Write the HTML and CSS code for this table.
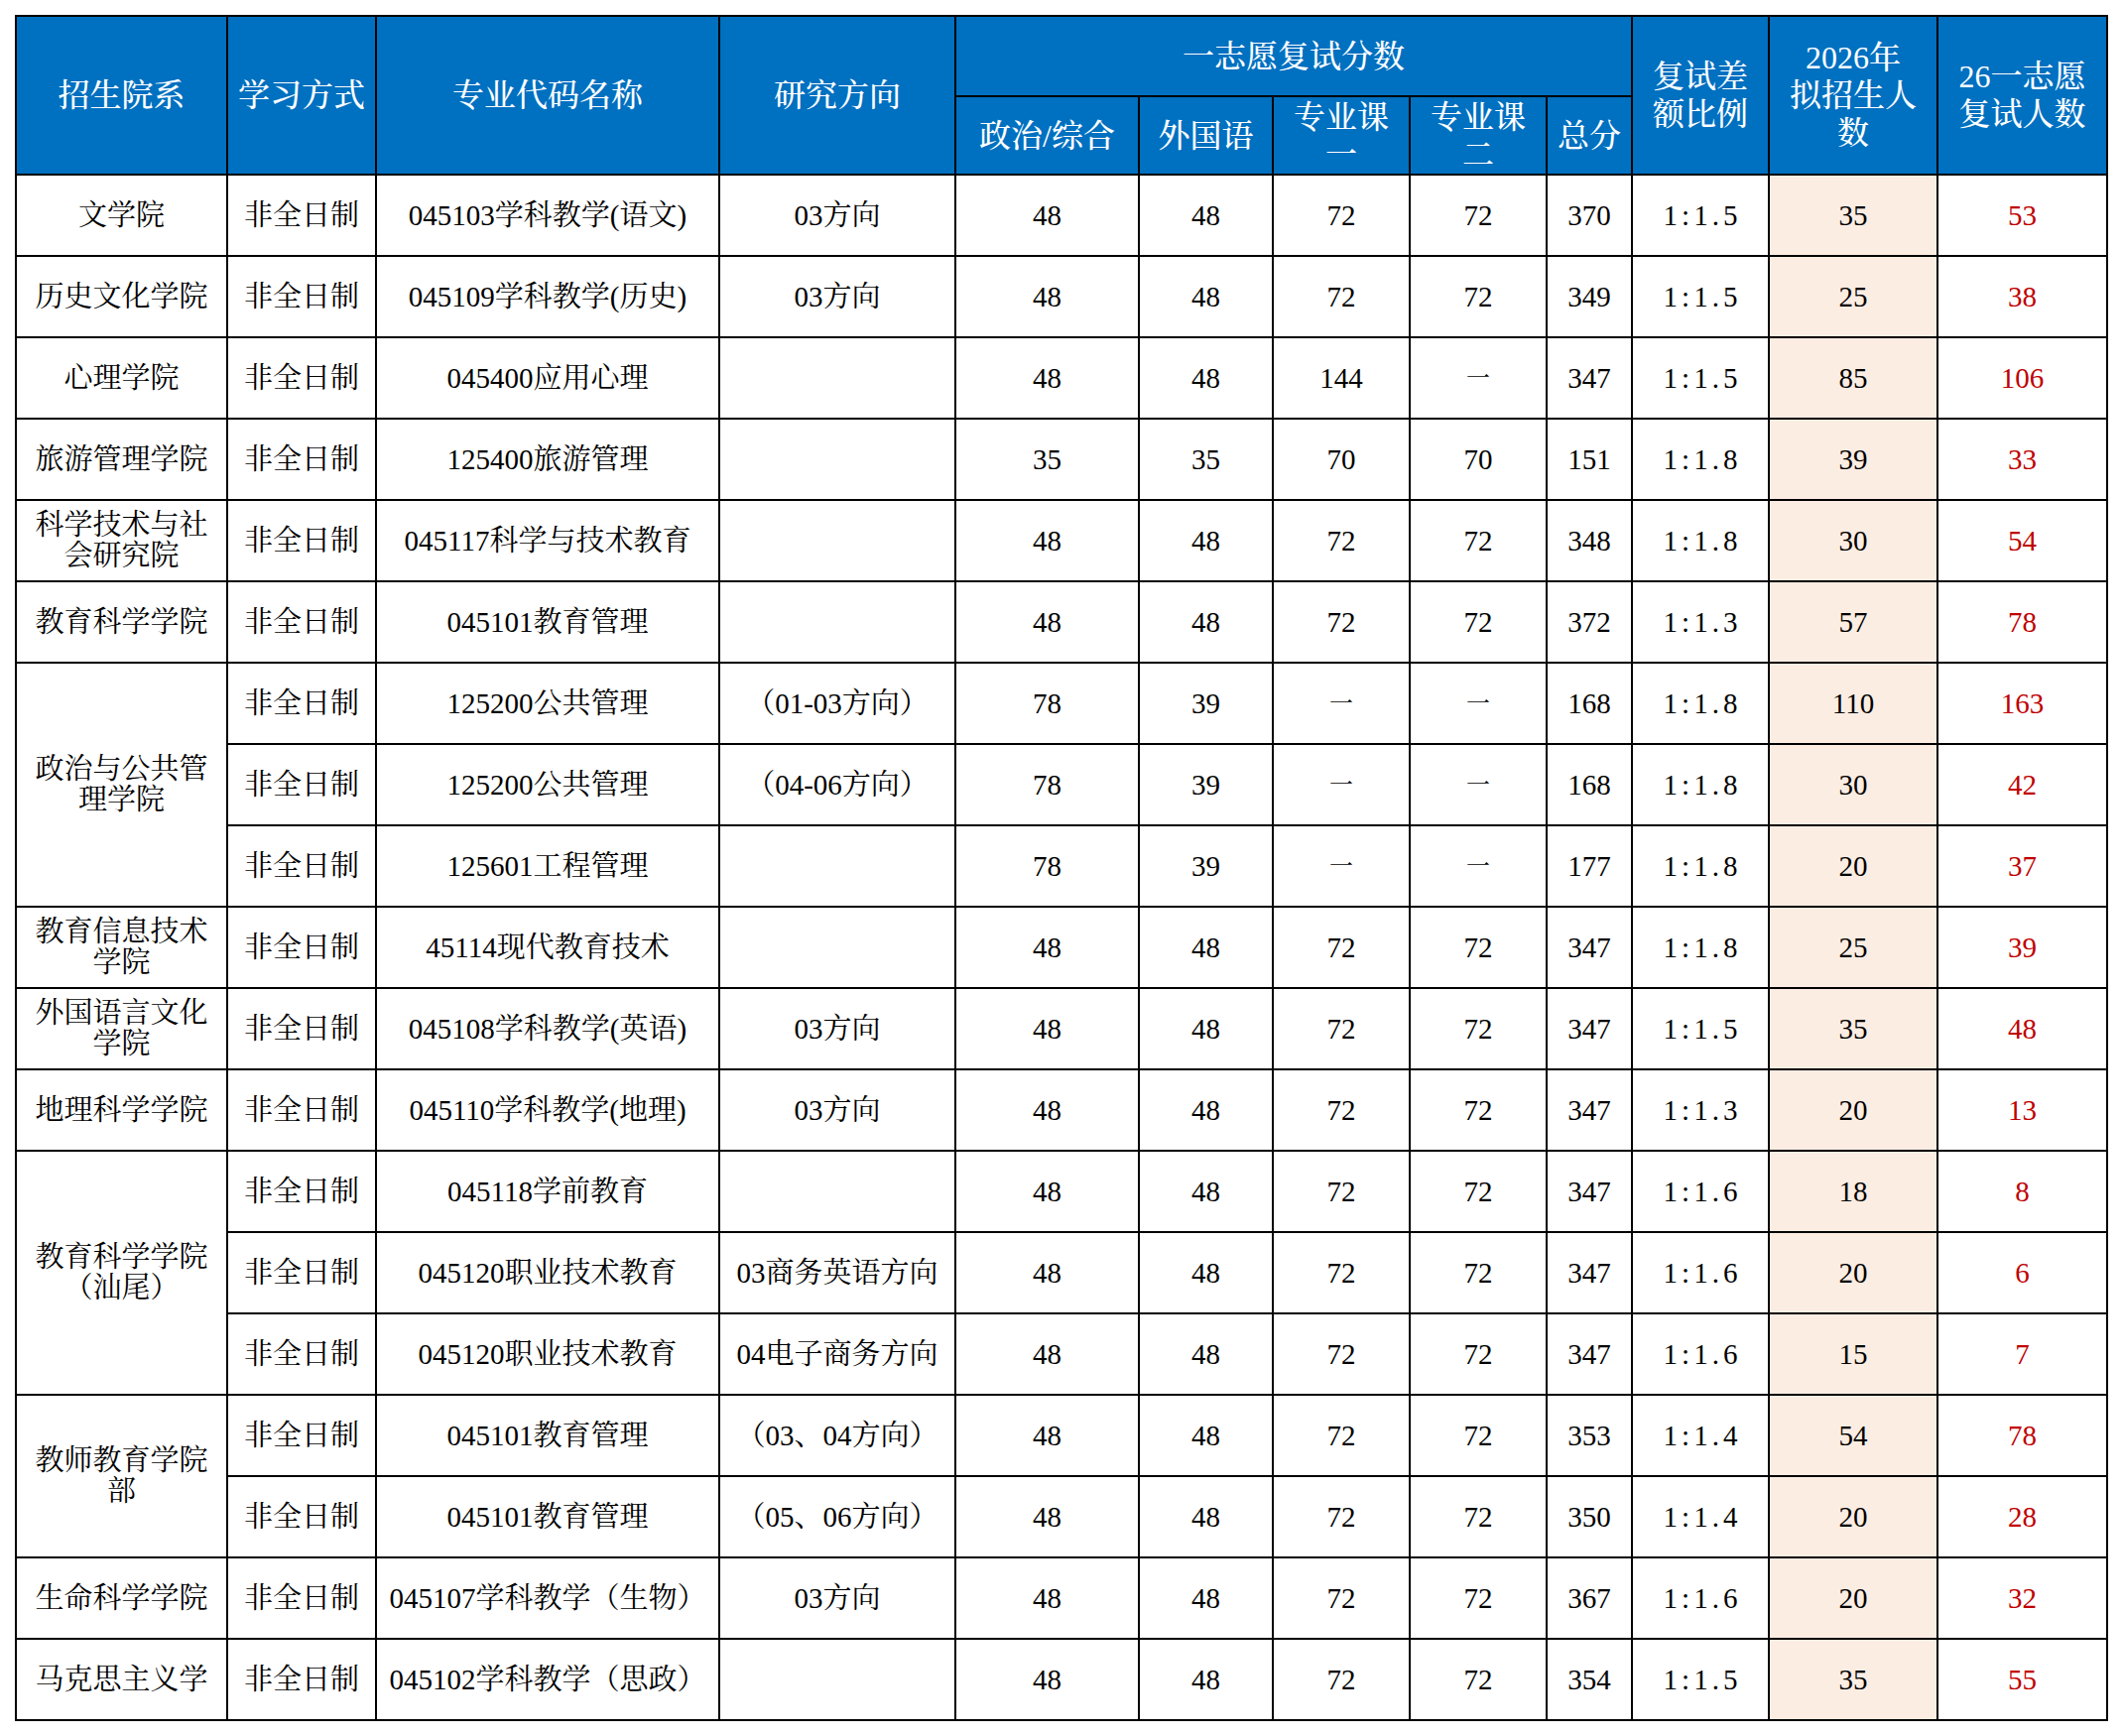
FILE: index.html
```html
<!DOCTYPE html>
<html lang="zh-CN">
<head>
<meta charset="utf-8">
<title>一志愿复试分数</title>
<link rel="stylesheet" href="styles.css">
</head>
<body>
<table class="sheet">
  <colgroup>
    <col class="c-dept"><col class="c-mode"><col class="c-major"><col class="c-dir">
    <col class="c-pol"><col class="c-lang"><col class="c-p1"><col class="c-p2"><col class="c-total">
    <col class="c-ratio"><col class="c-plan"><col class="c-cnt">
  </colgroup>
  <thead>
    <tr class="h1">
      <th rowspan="2">招生院系</th>
      <th rowspan="2">学习方式</th>
      <th rowspan="2">专业代码名称</th>
      <th rowspan="2">研究方向</th>
      <th colspan="5">一志愿复试分数</th>
      <th rowspan="2">复试差<br>额比例</th>
      <th rowspan="2">2026年<br>拟招生人<br>数</th>
      <th rowspan="2">26一志愿<br>复试人数</th>
    </tr>
    <tr class="h2">
      <th>政治/综合</th>
      <th>外国语</th>
      <th>专业课<br>一</th>
      <th>专业课<br>二</th>
      <th>总分</th>
    </tr>
  </thead>
  <tbody>
    <tr><td>文学院</td><td>非全日制</td><td>045103学科教学(语文)</td><td>03方向</td><td>48</td><td>48</td><td>72</td><td>72</td><td>370</td><td class="ratio">1:1.5</td><td class="plan">35</td><td class="red">53</td></tr>
    <tr><td>历史文化学院</td><td>非全日制</td><td>045109学科教学(历史)</td><td>03方向</td><td>48</td><td>48</td><td>72</td><td>72</td><td>349</td><td class="ratio">1:1.5</td><td class="plan">25</td><td class="red">38</td></tr>
    <tr><td>心理学院</td><td>非全日制</td><td>045400应用心理</td><td></td><td>48</td><td>48</td><td>144</td><td class="dash">一</td><td>347</td><td class="ratio">1:1.5</td><td class="plan">85</td><td class="red">106</td></tr>
    <tr><td>旅游管理学院</td><td>非全日制</td><td>125400旅游管理</td><td></td><td>35</td><td>35</td><td>70</td><td>70</td><td>151</td><td class="ratio">1:1.8</td><td class="plan">39</td><td class="red">33</td></tr>
    <tr><td>科学技术与社<br>会研究院</td><td>非全日制</td><td>045117科学与技术教育</td><td></td><td>48</td><td>48</td><td>72</td><td>72</td><td>348</td><td class="ratio">1:1.8</td><td class="plan">30</td><td class="red">54</td></tr>
    <tr><td>教育科学学院</td><td>非全日制</td><td>045101教育管理</td><td></td><td>48</td><td>48</td><td>72</td><td>72</td><td>372</td><td class="ratio">1:1.3</td><td class="plan">57</td><td class="red">78</td></tr>
    <tr><td rowspan="3">政治与公共管<br>理学院</td><td>非全日制</td><td>125200公共管理</td><td>（01-03方向）</td><td>78</td><td>39</td><td class="dash">一</td><td class="dash">一</td><td>168</td><td class="ratio">1:1.8</td><td class="plan">110</td><td class="red">163</td></tr>
    <tr><td>非全日制</td><td>125200公共管理</td><td>（04-06方向）</td><td>78</td><td>39</td><td class="dash">一</td><td class="dash">一</td><td>168</td><td class="ratio">1:1.8</td><td class="plan">30</td><td class="red">42</td></tr>
    <tr><td>非全日制</td><td>125601工程管理</td><td></td><td>78</td><td>39</td><td class="dash">一</td><td class="dash">一</td><td>177</td><td class="ratio">1:1.8</td><td class="plan">20</td><td class="red">37</td></tr>
    <tr><td>教育信息技术<br>学院</td><td>非全日制</td><td>45114现代教育技术</td><td></td><td>48</td><td>48</td><td>72</td><td>72</td><td>347</td><td class="ratio">1:1.8</td><td class="plan">25</td><td class="red">39</td></tr>
    <tr><td>外国语言文化<br>学院</td><td>非全日制</td><td>045108学科教学(英语)</td><td>03方向</td><td>48</td><td>48</td><td>72</td><td>72</td><td>347</td><td class="ratio">1:1.5</td><td class="plan">35</td><td class="red">48</td></tr>
    <tr><td>地理科学学院</td><td>非全日制</td><td>045110学科教学(地理)</td><td>03方向</td><td>48</td><td>48</td><td>72</td><td>72</td><td>347</td><td class="ratio">1:1.3</td><td class="plan">20</td><td class="red">13</td></tr>
    <tr><td rowspan="3">教育科学学院<br>（汕尾）</td><td>非全日制</td><td>045118学前教育</td><td></td><td>48</td><td>48</td><td>72</td><td>72</td><td>347</td><td class="ratio">1:1.6</td><td class="plan">18</td><td class="red">8</td></tr>
    <tr><td>非全日制</td><td>045120职业技术教育</td><td>03商务英语方向</td><td>48</td><td>48</td><td>72</td><td>72</td><td>347</td><td class="ratio">1:1.6</td><td class="plan">20</td><td class="red">6</td></tr>
    <tr><td>非全日制</td><td>045120职业技术教育</td><td>04电子商务方向</td><td>48</td><td>48</td><td>72</td><td>72</td><td>347</td><td class="ratio">1:1.6</td><td class="plan">15</td><td class="red">7</td></tr>
    <tr><td rowspan="2">教师教育学院<br>部</td><td>非全日制</td><td>045101教育管理</td><td>（03、04方向）</td><td>48</td><td>48</td><td>72</td><td>72</td><td>353</td><td class="ratio">1:1.4</td><td class="plan">54</td><td class="red">78</td></tr>
    <tr><td>非全日制</td><td>045101教育管理</td><td>（05、06方向）</td><td>48</td><td>48</td><td>72</td><td>72</td><td>350</td><td class="ratio">1:1.4</td><td class="plan">20</td><td class="red">28</td></tr>
    <tr><td>生命科学学院</td><td>非全日制</td><td>045107学科教学（生物）</td><td>03方向</td><td>48</td><td>48</td><td>72</td><td>72</td><td>367</td><td class="ratio">1:1.6</td><td class="plan">20</td><td class="red">32</td></tr>
    <tr><td>马克思主义学</td><td>非全日制</td><td>045102学科教学（思政）</td><td></td><td>48</td><td>48</td><td>72</td><td>72</td><td>354</td><td class="ratio">1:1.5</td><td class="plan">35</td><td class="red">55</td></tr>
  </tbody>
</table>
</body>
</html>
```

FILE: styles.css
```css
html, body {
  margin: 0;
  background: #ffffff;
}

body {
  padding: 15px 0 0 15px;
}

.sheet {
  border-collapse: collapse;
  table-layout: fixed;
  width: 2108px;
  font-family: "Liberation Serif", "Noto Serif CJK SC", "Noto Sans CJK SC", serif;
  color: #000000;
}

.c-dept { width: 213px; }
.c-mode { width: 150px; }
.c-major { width: 346px; }
.c-dir { width: 238px; }
.c-pol { width: 185px; }
.c-lang { width: 135px; }
.c-p1 { width: 138px; }
.c-p2 { width: 138px; }
.c-total { width: 86px; }
.c-ratio { width: 138px; }
.c-plan { width: 170px; }
.c-cnt { width: 171px; }

.sheet th,
.sheet td {
  border: 2px solid #000000;
  padding: 0;
  text-align: center;
  vertical-align: middle;
  white-space: nowrap;
  overflow: hidden;
}

.sheet th {
  background: #0070c0;
  color: #ffffff;
  font-family: "Liberation Serif", "Noto Serif CJK SC", "Noto Sans CJK SC", serif;
  font-weight: 500;
  font-size: 32px;
  line-height: 38px;
}

.h1 { height: 81px; }
.h2 { height: 79px; }

.sheet td {
  height: 80px;
  font-size: 29px;
  line-height: 31px;
}

.sheet .ratio {
  letter-spacing: 4px;
  text-indent: 4px;
}

.sheet .plan {
  background: #fcede3;
}

.sheet .red {
  color: #c00000;
}

.sheet .dash {
  font-size: 24px;
}
```
